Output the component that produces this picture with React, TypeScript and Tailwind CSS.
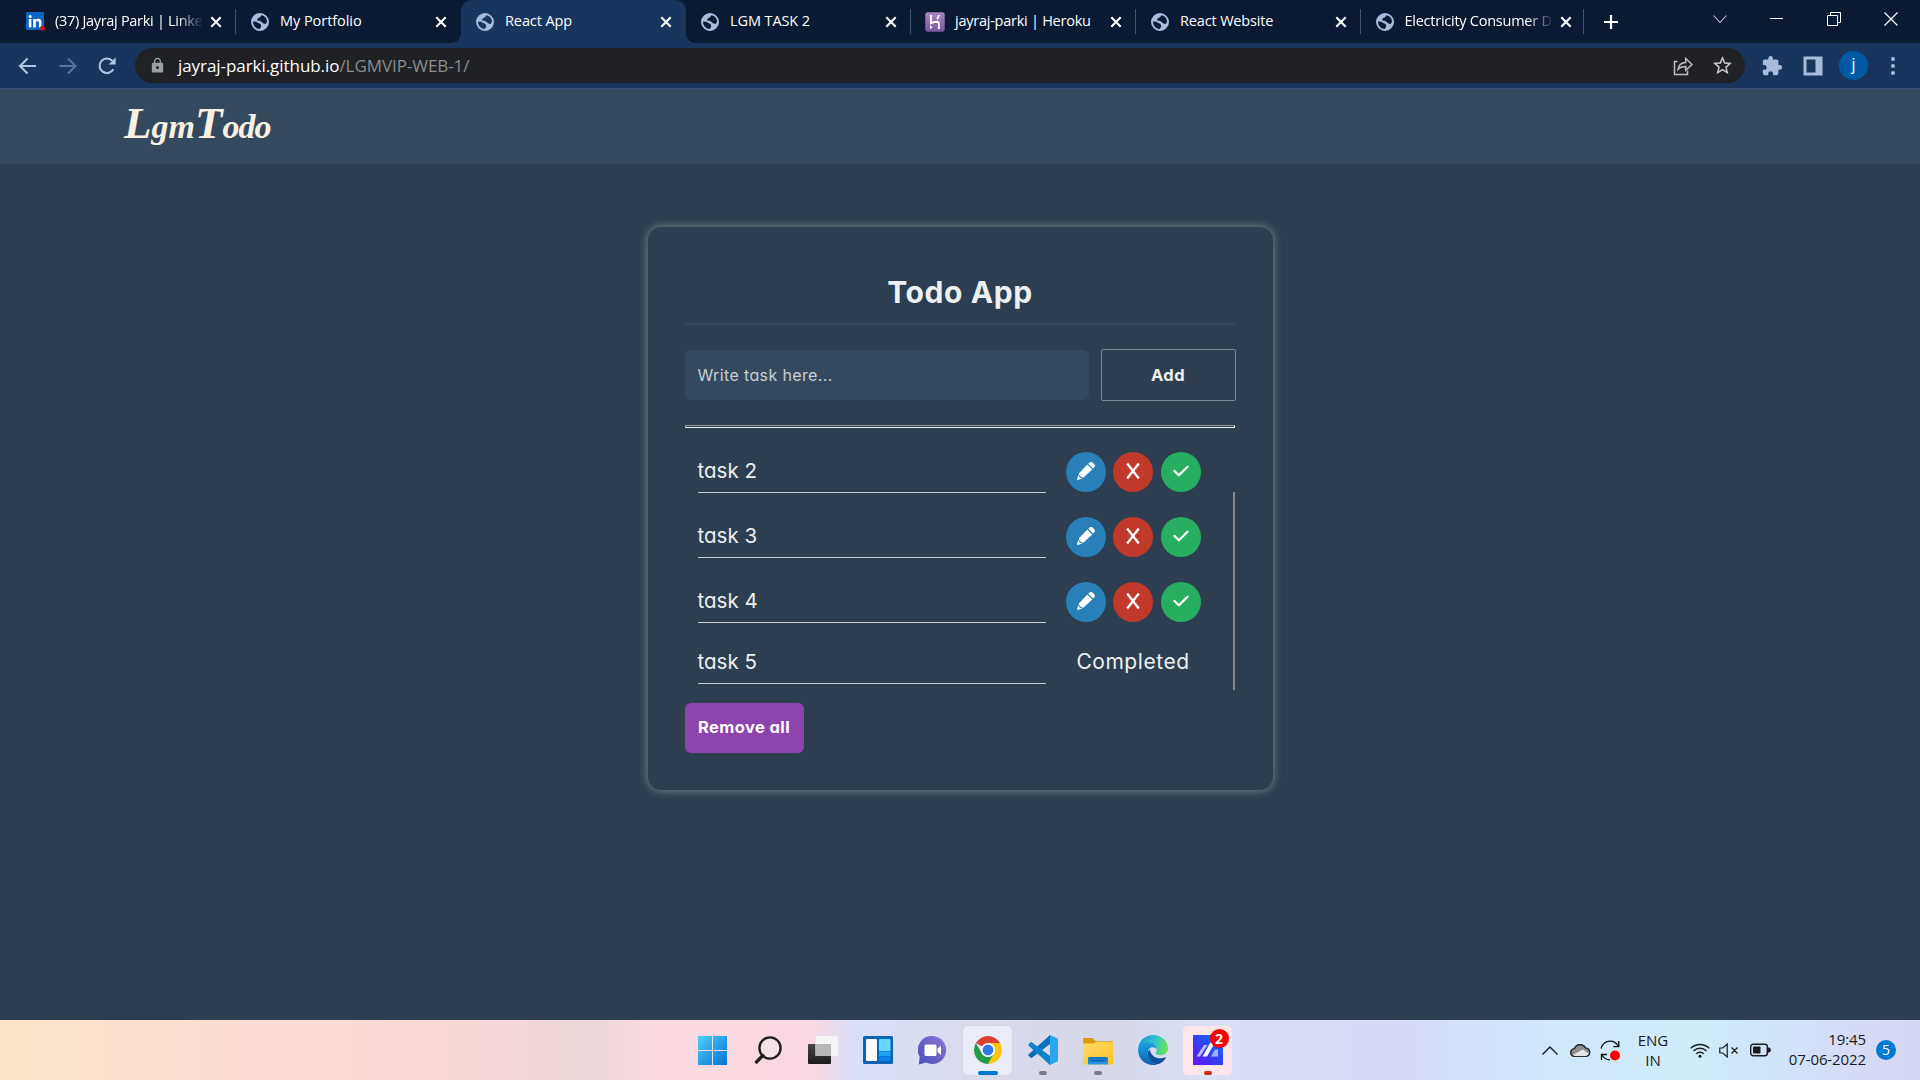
import React from "react";
import { MdExtension, MdLock, MdStarBorder } from "react-icons/md";

const UI = "font-['Open_Sans','Noto_Sans',sans-serif]";

/* ---------- favicons ---------- */
const Globe = () => (
  <svg viewBox="0 0 18 18" className="size-[18px]">
    <path
      fillRule="evenodd"
      fill="#a9bbdc"
      d="M9 0a9 9 0 1 1 0 18A9 9 0 0 1 9 0zM10.500 2.200 9 4.300 6.800 5.200 6 7.400l2.600.3 2 1.300 1.800 1.600 2.300.3 1.300-2.200A7 7 0 0 0 10.500 2.200zM2 8.500a7 7 0 0 0 6.800 7.500l1.500-2.700-.8-2.200-2.700-1.300-1.600-1z"
    />
  </svg>
);

const LinkedIn = () => (
  <svg viewBox="0 0 19 19" className="size-[19px]">
    <rect width="18" height="18" rx="1.2" fill="#0a66c2" />
    <g fill="#fff">
      <circle cx="4.1" cy="4.4" r="1.5" />
      <rect x="2.8" y="7" width="2.6" height="8.4" />
      <path d="M7.2 7h2.5v1.2C10.2 7.300 11.200 6.800 12.300 6.800c2.600 0 3.200 1.700 3.200 4v4.600h-2.600v-4.100c0-1.100-.1-2.200-1.500-2.200s-1.600 1-1.600 2.200v4.100H7.200z" />
    </g>
    <circle cx="16.500" cy="16.300" r="2.500" fill="#d11124" />
  </svg>
);

const Heroku = () => (
  <svg viewBox="0 0 20 20" className="-ml-px size-5">
    <defs>
      <linearGradient id="hk" x1="0" y1="0" x2="0" y2="1">
        <stop offset="0" stopColor="#a789c9" />
        <stop offset="1" stopColor="#7a559f" />
      </linearGradient>
    </defs>
    <rect x=".3" y=".3" width="19.400" height="19.400" rx="2.500" fill="url(#hk)" />
    <g fill="none" stroke="#fff" strokeWidth="1.900">
      <path d="M6 3v8.200c1.800-.9 3.800-1.500 5.400-1.500 2.100 0 2.500 1 2.500 2.200V17" />
      <path d="M13.900 3c-.1 1.500-.8 2.800-1.900 4" />
    </g>
    <path d="M5 13.300 7.600 15.300 5 17.300z" fill="#fff" />
  </svg>
);

const tabs = [
  { title: "(37) Jayraj Parki | Linke", icon: <LinkedIn />, fade: true, width: "w-[225px]", track: "tracking-[-0.3px]" },
  { title: "My Portfolio", icon: <Globe />, width: "w-[225px]", track: "tracking-[-0.05px]" },
  { title: "React App", icon: <Globe />, active: true, width: "w-[225px]", track: "tracking-[-0.1px]" },
  { title: "LGM TASK 2", icon: <Globe />, width: "w-[225px]", track: "tracking-[-0.1px]" },
  { title: "jayraj-parki | Heroku", icon: <Heroku />, width: "w-[225px]", track: "tracking-[-0.25px]" },
  { title: "React Website", icon: <Globe />, width: "w-[224.500px]", track: "tracking-[-0.15px]" },
  { title: "Electricity Consumer D", icon: <Globe />, fade: true, width: "w-[223.500px]", track: "tracking-[-0.25px]" },
];

const CloseX = () => (
  <svg viewBox="0 0 18 18" className="size-[18px]" stroke="#fff" strokeWidth="2.1">
    <path d="M4.300 4.300 13.700 13.700M13.700 4.300 4.300 13.700" />
  </svg>
);

const TabStrip = () => (
  <div className="flex h-[43px] items-stretch bg-[#0a1a33] pl-[11px]">
    {tabs.map((t, i) => (
      <div
        key={t.title}
        className={`relative flex shrink-0 items-center pl-[15px] ${t.width} ${t.active ? "rounded-t-[11px] bg-[#1a355d]" : ""}`}
      >
        {t.active && (
          <>
            <i className="absolute bottom-0 -left-[10px] size-[10px] bg-[radial-gradient(circle_at_0_0,transparent_9.500px,#1a355d_10.500px)]" />
            <i className="absolute -right-[10px] bottom-0 size-[10px] bg-[radial-gradient(circle_at_100%_0,transparent_9.500px,#1a355d_10.500px)]" />
          </>
        )}
        <span className="flex w-[29px] shrink-0 items-center">{t.icon}</span>
        <span
          className={`w-[152px] pb-0.5 text-[14.500px] leading-5 whitespace-nowrap text-white ${t.track} ${
            t.fade ? "[mask-image:linear-gradient(to_right,black_80%,transparent_98%)]" : ""
          }`}
        >
          {t.title}
        </span>
        <CloseX />
        {i !== 1 && i !== 2 && <i className="ml-auto h-[25px] w-px bg-[#46536a]" />}
      </div>
    ))}
    <svg viewBox="0 0 16 16" className="ml-[19px] size-4 self-center" stroke="#fff" strokeWidth="2.200">
      <path d="M8 1v14M1 8h14" />
    </svg>
    <div className="ml-auto flex h-[37px] items-center">
      <svg viewBox="0 0 14 14" className="mr-[43px] size-[14px]" fill="none" stroke="#c8ced8" strokeWidth="1.100">
        <path d="M.5 3.500 7 10.500l6.500-7" />
      </svg>
      <i className="mr-[44px] h-px w-[13px] bg-white" />
      <svg viewBox="0 0 14 14" className="mr-[43px] size-[14px]" fill="none" stroke="#fff" strokeWidth="1">
        <path d="M.5 3.500h10v10H.5zM3.500 3.500v-3h10v10h-3" />
      </svg>
      <svg viewBox="0 0 14 14" className="mr-[22px] size-[14px]" stroke="#fff" strokeWidth="1.200">
        <path d="M.5.5l13 13M13.500.5l-13 13" />
      </svg>
    </div>
  </div>
);

const Toolbar = () => (
  <div className="flex h-[46px] items-center border-b border-[#35507a] bg-[#1a355d] pl-[18px]">
    <svg viewBox="0 0 20 20" className="size-5" fill="none" stroke="#b4c5e3" strokeWidth="2">
      <path d="M18 10H3M9.500 2.500 2 10l7.500 7.500" />
    </svg>
    <svg viewBox="0 0 20 20" className="ml-5 size-5" fill="none" stroke="#5a7299" strokeWidth="2">
      <path d="M1.500 10h15M10 2.500 17.500 10 10 17.500" />
    </svg>
    <svg viewBox="0 0 20 20" className="ml-[19px] size-5" fill="none" stroke="#b4c5e3" strokeWidth="2.100">
      <path d="M16.300 13.300A7.300 7.300 0 1 1 15.300 4.800" />
      <path d="M18.600 1.500v7h-7z" fill="#b4c5e3" stroke="none" />
    </svg>
    <div className="ml-[18px] flex h-[35px] w-[1610px] items-center rounded-full bg-[#202124] pl-[14px] text-[17px]">
      <MdLock className="size-[17px] text-[#9aa0a6]" />
      <span className="ml-3 whitespace-nowrap tracking-[-0.06px] text-white">
        jayraj-parki.github.io<span className="text-[#8b8d91]">/LGMVIP-WEB-1/</span>
      </span>
      <svg viewBox="0 0 20 20" className="mr-[18px] ml-auto size-5" fill="none" stroke="#bcbec1" strokeWidth="1.500">
        <path d="M4.500 5.500H1.500v13h13v-4" />
        <path d="M5 13.500c.6-4.500 3.200-6.800 7.700-7V2.500l6.300 6-6.300 5.800V10.500c-3.400 0-5.700.8-7.700 3z" />
      </svg>
      <MdStarBorder className="mr-[11px] size-[23px] text-[#c6c8cb]" />
    </div>
    <MdExtension className="ml-[16px] size-[22px] text-[#a9bbdc]" />
    <svg viewBox="0 0 20 20" className="ml-[20px] size-5">
      <path d="M.5.500h19v19H.5zM3.500 3.500v13h9v-13z" fill="#a9bbdc" fillRule="evenodd" />
    </svg>
    <span className="ml-[16px] flex size-[29px] items-center justify-center rounded-full bg-[#0059a3] pb-1 text-[16px] leading-none text-white">j</span>
    <span className="ml-[23px] flex flex-col gap-[3px]">
      <i className="size-1 rounded-full bg-[#a9bbdc]" />
      <i className="size-1 rounded-full bg-[#a9bbdc]" />
      <i className="size-1 rounded-full bg-[#a9bbdc]" />
    </span>
  </div>
);

/* ---------- page ---------- */
const Header = () => (
  <header className="flex h-[75px] items-center bg-[#34495e] pl-[124px]">
    <h1 className="-mt-1.5 flex items-baseline font-['Liberation_Serif',serif] leading-none font-bold text-[#faf0e1] italic">
      <span className="text-[45px]">L</span>
      <span className="text-[34px]">gm</span>
      <span className="text-[45px]">T</span>
      <span className="text-[34px] tracking-[-1px]">odo</span>
    </h1>
  </header>
);

const Pencil = () => (
  <svg viewBox="0 0 18 18" className="size-[18px]" fill="#fff">
    <path d="M11.300 1.700 12.600.5c1-.8 2-.7 2.900.1l1.700 1.700c.9.900 1 2 .1 2.900l-1.300 1.300z" />
    <path d="M10.400 2.600 15.200 7.400 6.300 15.700 3.800 14.900 2.200 13l-.4-1.600z" />
    <path d="M1.400 12.400 0 17.600c0 .3.200.4.500.4l5-1.500-2.300-.6-1.400-1.700z" />
  </svg>
);

const RowButtons = () => (
  <div className="mb-px flex gap-[7.500px]">
    <button className="flex size-10 items-center justify-center rounded-full bg-[#2980b9] pb-[3px]">
      <Pencil />
    </button>
    <button className="flex size-10 items-center justify-center rounded-full bg-[#c0392b] pb-[3px]">
      <svg viewBox="0 0 14 16" className="h-4 w-3.5" stroke="#fff" strokeWidth="2.400">
        <path d="M1.200.6 12.800 15.400M12.800.6 1.200 15.400" />
      </svg>
    </button>
    <button className="flex size-10 items-center justify-center rounded-full bg-[#27ae60] pb-[3px]">
      <svg viewBox="0 0 16 12" className="h-3 w-4" fill="none" stroke="#fff" strokeWidth="2.300" strokeLinecap="round" strokeLinejoin="round">
        <path d="M1.500 6 5.900 10.300 14.500 1.700" />
      </svg>
    </button>
  </div>
);

const tasks = [
  { name: "task 2", done: false },
  { name: "task 3", done: false },
  { name: "task 4", done: false },
  { name: "task 5", done: true },
];

const TodoCard = () => (
  <main className="mx-auto mt-[63px] h-[563px] w-[625px] rounded-[13px] bg-[#2c3e50] px-[37px] pt-[45px] font-['Inter',sans-serif] shadow-[0_0_10px_#7f8c8d] [font-feature-settings:'cv11']">
    <h2 className="h-[51px] text-center text-[30px] leading-[41px] font-bold tracking-[0.6px] text-[#ecf0f1]">Todo App</h2>
    <div className="h-0.5 w-[550px] bg-[#34495e]" />
    <div className="mt-6 flex items-center">
      <div className="flex h-[50px] w-[404px] items-center rounded-[6px] bg-[#34495e] pl-[13px] text-base tracking-[0.37px] text-[#c9cdd0]">
        Write task here...
      </div>
      <button className="ml-3 h-[52px] w-[135px] rounded-[2px] border border-[#7b8894] text-[16.500px] font-bold tracking-[0.5px] text-[#ecf0f1]">
        Add
      </button>
    </div>
    <div className="mt-6 h-[3px] w-[550px] border border-t-[#9a9a9a] border-r-[#eeeeee] border-b-[#eeeeee] border-l-[#9a9a9a]" />
    <div className="mt-3 flex h-[250px] w-[550px] justify-between">
      <ul className="pt-3 pl-[13px] text-[20.500px] text-[#ecf0f1]">
        {tasks.map((t) => (
          <li key={t.name} className={`flex ${t.done ? "h-[37px]" : "mb-6 h-[41px]"} items-end`}>
            <span className="mr-5 h-[37px] w-[348px] border-b border-[#c8ccd0] leading-[30px]">{t.name}</span>
            {t.done ? (
              <span className="w-[135px] self-start text-center text-[21px] leading-[30px] tracking-[0.55px]">Completed</span>
            ) : (
              <RowButtons />
            )}
          </li>
        ))}
      </ul>
      <i className="mt-[52px] w-0.5 bg-[#888888]" />
    </div>
    <button className="mt-[13px] flex h-[50px] w-[119px] items-center justify-center rounded-[6px] bg-[#8e44ad] pb-0.5 text-[16.500px] font-bold tracking-[0.4px] text-white">
      Remove all
    </button>
  </main>
);

/* ---------- taskbar ---------- */
const WindowsLogo = () => (
  <svg viewBox="0 0 29 29" className="size-[29px]">
    <defs>
      <linearGradient id="wn" gradientUnits="userSpaceOnUse" x1="0" y1="0" x2="29" y2="29">
        <stop offset="0" stopColor="#4fd0fc" />
        <stop offset="1" stopColor="#0272d0" />
      </linearGradient>
    </defs>
    <path d="M0 0h14v14H0zM15 0h14v14H15zM0 15h14v14H0zM15 15h14v14H15z" fill="url(#wn)" />
  </svg>
);

const Search = () => (
  <svg viewBox="0 0 28 28" className="size-7" fill="none" stroke="#1f1f1f" strokeWidth="2.400">
    <circle cx="16" cy="12" r="10.600" fill="#f4e2e6" />
    <path d="M8.800 19.500 2.500 26" strokeWidth="3.300" strokeLinecap="round" />
  </svg>
);

const TaskView = () => (
  <svg viewBox="0 0 30 28" className="h-7 w-[30px]">
    <defs>
      <linearGradient id="tv" x1="0" y1="0" x2="0" y2="1">
        <stop offset="0" stopColor="#464646" />
        <stop offset="1" stopColor="#1b1b1b" />
      </linearGradient>
    </defs>
    <rect x="0" y="8" width="23" height="20" rx="1" fill="url(#tv)" />
    <rect x="7.500" y="0" width="22.500" height="20" rx="1" fill="#f4f4f4" />
    <rect x="7.500" y="8" width="15.500" height="12" fill="#b9b7b6" />
  </svg>
);

const Widgets = () => (
  <svg viewBox="0 0 30 28" className="h-7 w-[30px]">
    <rect width="30" height="28" rx="1.500" fill="#0b65b4" />
    <rect x="3" y="3" width="11" height="22" rx="1.200" fill="#fafafa" />
    <rect x="16" y="3" width="11.500" height="12" rx="1" fill="#66d8ff" />
    <rect x="16" y="15.500" width="11.500" height="4.500" fill="#1fa3f5" />
    <rect x="16" y="20.500" width="11.500" height="4.500" rx="1" fill="#0a84ea" />
  </svg>
);

const Chat = () => (
  <svg viewBox="0 0 29 29" className="size-[29px]">
    <defs>
      <linearGradient id="ch" x1="0" y1="1" x2="1" y2="0">
        <stop offset="0" stopColor="#4d4fbf" />
        <stop offset=".55" stopColor="#6f62c4" />
        <stop offset="1" stopColor="#8a7ae0" />
      </linearGradient>
    </defs>
    <path d="M14.500 0a14 14 0 1 1-6.600 26.500L.8 28.500 1.700 21A14 14 0 0 1 14.500 0z" fill="url(#ch)" />
    <rect x="6.500" y="8.500" width="12" height="11.500" rx="1.500" fill="#fff" />
    <path d="M19.500 12.500 23 9.500v9.500l-3.500-3z" fill="#fff" />
  </svg>
);

const Chrome = () => (
  <svg viewBox="0 0 28 28" className="size-7">
    <path d="M14 14 1.880 7A14 14 0 0 1 26.120 7z" fill="#dd4034" />
    <path d="M14 7H26.120A14 14 0 0 1 14 28L20 17.500z" fill="#fdc60f" />
    <path d="M1.880 7 8 17.500A7 7 0 0 0 20 17.500L14 28A14 14 0 0 1 1.880 7z" fill="#249b46" />
    <circle cx="14" cy="14" r="7" fill="#fff" />
    <circle cx="14" cy="14" r="5.400" fill="#3079e6" />
  </svg>
);

const VSCode = () => (
  <svg viewBox="0 0 30 30" className="size-[30px]">
    <path d="M22 0 0.700 19.300c-.5.5-.5 1.300 0 1.800l1.700 1.500c.5.400 1 .4 1.500.1L23 8.300z" fill="#0a6fb8" />
    <path d="M22 30 .7 10.700c-.5-.5-.5-1.300 0-1.800L2.400 7.400c.5-.4 1-.4 1.500-.1L23 21.700z" fill="#0f82cc" />
    <path d="M22 0l7 3.200c.6.300 1 .9 1 1.600v20.400c0 .7-.4 1.300-1 1.600L22 30z" fill="#2aa6f0" />
  </svg>
);

const Folder = () => (
  <svg viewBox="0 0 30 27" className="mt-0.5 h-[27px] w-[30px]">
    <defs>
      <linearGradient id="fo" x1="0" y1="0" x2="1" y2="1">
        <stop offset="0" stopColor="#ffdb6b" />
        <stop offset="1" stopColor="#fcc125" />
      </linearGradient>
      <linearGradient id="fb" x1="0" y1="0" x2="0" y2="1">
        <stop offset="0" stopColor="#0d70c4" />
        <stop offset="1" stopColor="#2b9cec" />
      </linearGradient>
    </defs>
    <path d="M0 8V1.500C0 .6.500 0 1.300 0h8.500l3 3.300H29c.6 0 1 .4 1 1V8z" fill="#dc9a07" />
    <path d="M0 5.500h10.500L13 4h17v22.500H0z" fill="url(#fo)" />
    <path d="M5 26.500V21c0-1.200.8-2 2-2h16c1.200 0 2 .8 2 2v5.500z" fill="url(#fb)" />
    <path d="M8.500 22.800h13" stroke="#064f94" strokeWidth="1" />
  </svg>
);

const Edge = () => (
  <svg viewBox="0 0 30 30" className="size-[30px]">
    <defs>
      <linearGradient id="e1" x1="0" y1=".3" x2="1" y2=".5">
        <stop offset="0" stopColor="#1b94dc" />
        <stop offset=".5" stopColor="#2cc3d3" />
        <stop offset="1" stopColor="#6be25a" />
      </linearGradient>
      <linearGradient id="e2" x1="0" y1="0" x2="0" y2="1">
        <stop offset="0" stopColor="#1b9de2" />
        <stop offset="1" stopColor="#0b62b4" />
      </linearGradient>
    </defs>
    <path d="M.2 13.500C1 5.500 7.300 0 15 0c8.500 0 15 6 15 13 0 4.600-3.500 7.300-7.500 7.300-3 0-5-.9-5-2 0-.7 1.100-1.200 1.100-3.500C18.600 11.500 15.500 9.300 11 9.300 6 9.300 1.800 11 .2 13.500z" fill="url(#e1)" />
    <path d="M.2 13.500C1.800 9.500 5.600 7.700 10 7.700c4.800 0 8.600 3 8.600 6.300-1.100-1.300-2.600-1.800-4-1.800-3 0-4.900 2.700-4.900 6 0 5.200 3.600 9.700 9.300 11.200-1.200.4-2.500.6-4 .6C6 30-.8 22.500.2 13.500z" fill="url(#e2)" />
    <path d="M12 14.500c-1.500 1.200-2.300 2.300-2.300 4.200 0 5.200 4.300 10.300 9.800 10.600 3.500-1 6.500-3.300 8.300-6.400.2-.5-.2-.9-.7-.6-1.200.6-2.600 1-4.300 1-5.600 0-10.800-3.500-10.800-8.800z" fill="#11519b" />
  </svg>
);

const MyAsus = () => (
  <span className="relative">
    <svg viewBox="0 0 30 30" className="size-[30px]">
      <defs>
        <linearGradient id="ma" x1="1" y1="0" x2="0" y2="1">
          <stop offset="0" stopColor="#1477ee" />
          <stop offset=".5" stopColor="#3042f2" />
          <stop offset="1" stopColor="#6412f5" />
        </linearGradient>
      </defs>
      <rect width="30" height="30" fill="url(#ma)" />
      <path d="M3.500 21.500 11 10h3.500L7 21.500z" fill="#b9bcff" />
      <path d="M9.500 21.500 17.500 7.500h4.500L14 21.500z" fill="#fff" />
      <path d="M18 21.500l4-7h3v7z" fill="#9cb3ff" />
    </svg>
    <span className="absolute -top-1.5 left-[17px] flex size-[19px] items-center justify-center rounded-full bg-[#fe0000] text-[14px] leading-none font-bold text-white">
      2
    </span>
  </span>
);

const apps = [
  { id: "start", icon: <WindowsLogo />, box: "", bar: "" },
  { id: "search", icon: <Search />, box: "", bar: "" },
  { id: "views", icon: <TaskView />, box: "", bar: "" },
  { id: "widgets", icon: <Widgets />, box: "", bar: "" },
  { id: "chat", icon: <Chat />, box: "", bar: "" },
  { id: "chrome", icon: <Chrome />, box: "bg-[#eaedf7] shadow-[0_0_1px_1px_#d3d6e3]", bar: "w-5 bg-[#0078d4]" },
  { id: "code", icon: <VSCode />, box: "", bar: "w-2 bg-[#7b7c84]" },
  { id: "files", icon: <Folder />, box: "", bar: "w-2 bg-[#7b7c84]" },
  { id: "edge", icon: <Edge />, box: "", bar: "" },
  { id: "asus", icon: <MyAsus />, box: "bg-[#fde6e9]", bar: "w-2 bg-[#c42b1c]" },
];

const Taskbar = () => (
  <footer className="flex h-[60px] items-center justify-between bg-[linear-gradient(to_right,#fae6cb_0px,#fbdcd4_250px,#f7d8d6_450px,#ecd7d9_600px,#fbdbe0_655px,#fad8e2_810px,#d8dff7_858px,#dadcee_960px,#d6d7e8_1100px,#dadff4_1200px,#d6daf6_1400px,#d2e6fb_1520px,#cfecf8_1690px,#d0e5f9_1770px,#d6dcf6_1850px,#d5d8f3_1920px)] pr-6 pl-[685px]">
    <div className="flex">
      {apps.map((a) => (
        <div key={a.id} className="flex w-[55px] justify-center">
          <div className={`relative flex size-[49px] items-center justify-center rounded-[5px] ${a.box}`}>
            {a.icon}
            {a.bar && <i className={`absolute bottom-0 left-1/2 h-1 -translate-x-1/2 rounded-full ${a.bar}`} />}
          </div>
        </div>
      ))}
    </div>
    <div className="flex items-center text-[15px] leading-5 text-[#1b1b1f]">
      <span className="flex w-[30px] justify-center">
        <svg viewBox="0 0 16 9" className="h-[9px] w-4" fill="none" stroke="#1b1b1f" strokeWidth="1.400">
          <path d="M.5 8.500 8 1l7.500 7.500" />
        </svg>
      </span>
      <span className="flex w-[30px] justify-center">
        <svg viewBox="0 0 21 15" className="h-[15px] w-[21px]" strokeWidth="1.200">
          <path d="M5 13.500a4 4 0 0 1-.5-8A6 6 0 0 1 15.500 5a4.300 4.300 0 0 1 .8 8.500z" fill="#8f8f8f" stroke="#2b2b2b" />
          <path d="M2.500 12 13 6.500l6 4.500-2.500 2H5z" fill="#e6e6e6" />
          <path d="M5 13.500a4 4 0 0 1-.5-8A6 6 0 0 1 15.500 5a4.300 4.300 0 0 1 .8 8.500z" fill="none" stroke="#2b2b2b" />
        </svg>
      </span>
      <span className="flex w-[30px] justify-center">
        <svg viewBox="0 0 20 21" className="h-[21px] w-5" fill="none" stroke="#111" strokeWidth="1.300">
          <path d="M1 8.500C2.500 4 6 1.200 10 1.200c3.600 0 6.500 1.800 8.300 5M18.800 1v5.600h-5.500" />
          <path d="M1.500 20v-5.500H7M1.800 14.800c1.700 3 4.700 5 8.200 5" />
          <circle cx="15" cy="15.500" r="5" fill="#fe0000" stroke="none" />
        </svg>
      </span>
      <span className="flex w-14 flex-col text-center">
        <span>ENG</span>
        <span>IN</span>
      </span>
      <span className="flex w-[38px] justify-center">
        <svg viewBox="0 0 20 15" className="h-[15px] w-5" fill="none" stroke="#1b1b1f" strokeWidth="1.400">
          <path d="M.8 5.300a13 13 0 0 1 18.400 0M3.500 8a9.200 9.200 0 0 1 13 0M6.300 10.700a5.300 5.300 0 0 1 7.400 0" />
          <circle cx="10" cy="13.200" r="1.500" fill="#1b1b1f" stroke="none" />
        </svg>
      </span>
      <span className="flex w-5 justify-center">
        <svg viewBox="0 0 20 15" className="h-[15px] w-5 shrink-0" fill="none" stroke="#1b1b1f" strokeWidth="1.200">
          <path d="M.8 5h3l4.400-4v13l-4.400-4h-3zM12.500 4.500l6 6M18.500 4.500l-6 6" />
        </svg>
      </span>
      <span className="flex w-[42px] justify-center">
        <svg viewBox="0 0 21 14" className="h-[14px] w-[21px]">
          <rect x=".7" y="1.200" width="16.600" height="11.600" rx="2.500" fill="none" stroke="#1b1b1f" strokeWidth="1.400" />
          <rect x="3" y="3.500" width="7.500" height="7" rx=".8" fill="#1b1b1f" />
          <path d="M18 5h1.500l.7 1v2l-.7 1H18z" fill="#1b1b1f" stroke="#1b1b1f" />
        </svg>
      </span>
      <span className="-mt-0.5 flex w-[85px] flex-col text-right tracking-[-0.1px]">
        <span>19:45</span>
        <span>07-06-2022</span>
      </span>
      <span className="ml-2.5 flex size-5 items-center justify-center rounded-full bg-[#0078d4] text-[14px] text-white">5</span>
    </div>
  </footer>
);

export default function App() {
  return (
    <div className={`flex h-[1080px] w-[1920px] flex-col overflow-hidden bg-[#2c3e50] ${UI}`}>
      <TabStrip />
      <Toolbar />
      <Header />
      <div className="flex-1">
        <div className="flex">
          <TodoCard />
        </div>
      </div>
      <Taskbar />
    </div>
  );
}
